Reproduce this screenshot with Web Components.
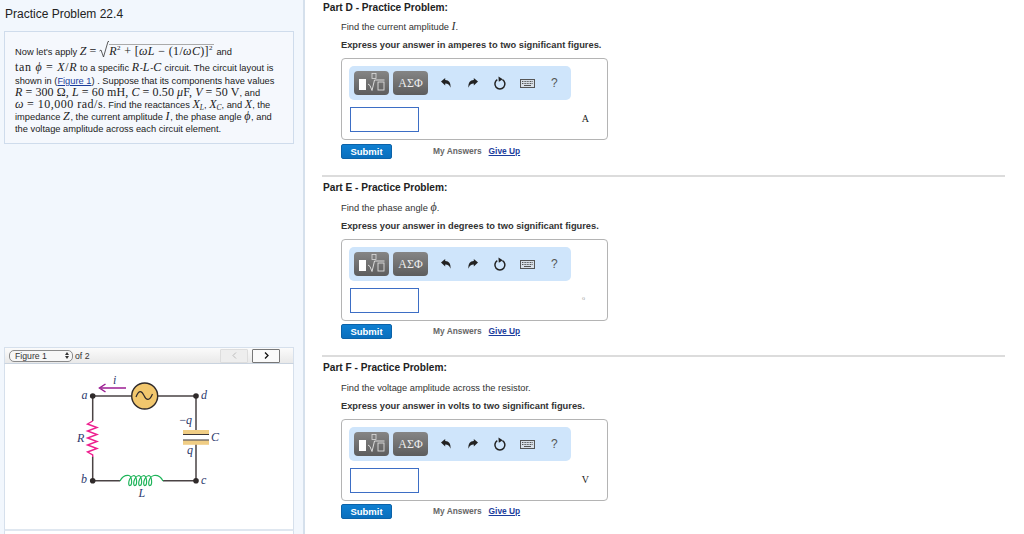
<!DOCTYPE html>
<html><head><meta charset="utf-8"><style>
html,body{margin:0;padding:0;background:#fff}
body{width:1024px;height:534px;overflow:hidden;display:flex;font-family:"Liberation Sans",Arial,sans-serif;color:#222}
.right{flex:none;padding-left:17px;width:683px}
i{font-family:"Liberation Serif",serif;font-size:12px;line-height:0}
</style></head><body>
<left-pane></left-pane>
<div class="right">
<problem-part first part-name="Part D - Practice Problem:" unit="A">Find the current amplitude <i>I</i>.<span slot="express">Express your answer in amperes to two significant figures.</span></problem-part>
<problem-part part-name="Part E - Practice Problem:" unit="o" faint>Find the phase angle <i>ϕ</i>.<span slot="express">Express your answer in degrees to two significant figures.</span></problem-part>
<problem-part part-name="Part F - Practice Problem:" unit="V">Find the voltage amplitude across the resistor.<span slot="express">Express your answer in volts to two significant figures.</span></problem-part>
</div>
<script>
function el(name,html){
  customElements.define(name,class extends HTMLElement{
    connectedCallback(){
      if(this.shadowRoot)return;
      const s=this.attachShadow({mode:'open'});
      s.innerHTML=typeof html==='function'?html(this):html;
    }
  });
}
el('math-toolbar',`<style>
:host{display:grid;grid-template-columns:35px 43px repeat(5,27.2px);align-items:center;width:222px;height:34px;box-sizing:border-box;padding-left:5px;background:#cfe5fb;border-radius:5px}
.b{height:24px;width:35px;border-radius:4px;background:linear-gradient(#858585,#5d5d5d);box-sizing:border-box;display:flex;align-items:center;justify-content:center;color:#eee;font:12px "Liberation Serif",serif}
.b2{margin-left:4px}
.i{display:flex;justify-content:center;align-items:center;height:24px}
.q{font:12px "Liberation Sans",sans-serif;color:#555}
</style>
<div class="b"><svg width="33" height="22" viewBox="0 0 33 22"><rect x="4" y="7" width="7" height="11" fill="#fff"/><rect x="17" y="1.5" width="4" height="5" fill="none" stroke="#ddd" stroke-width=".8"/><path d="M13 12l2 1.500 2 5 2.500-10.500h10" fill="none" stroke="#e6e6e6" stroke-width=".9"/><rect x="23" y="10" width="6" height="8" fill="none" stroke="#ddd" stroke-width=".9"/></svg></div>
<div class="b b2">ΑΣΦ</div>
<div class="i"><svg width="12" height="12" viewBox="0 0 12 12"><path d="M1 4.500L5.200 1V3C9 3 11 6 10.500 10.800 9.500 7.800 8 6.500 5.200 6.500V8.500Z" fill="#222"/></svg></div>
<div class="i"><svg width="12" height="12" viewBox="0 0 12 12"><path d="M11 4.500L6.800 1V3C3 3 1 6 1.500 10.800 2.500 7.800 4 6.500 6.800 6.500V8.500Z" fill="#222"/></svg></div>
<div class="i"><svg width="14" height="14" viewBox="0 0 14 14"><path d="M4.300 3.700A5 5 0 1 0 9.500 3.700" fill="none" stroke="#222" stroke-width="1.500"/><path d="M5.500 0.500L9.800 3.300 5.800 5.800Z" fill="#222"/></svg></div>
<div class="i"><svg width="15" height="9" viewBox="0 0 15 9"><rect x=".5" y=".5" width="14" height="8" fill="#d8dfe6" stroke="#555"/><path d="M2 2.500h11M2 4.500h11" stroke="#555" stroke-width="1" stroke-dasharray="1 .6"/><path d="M4 6.500h7" stroke="#555"/></svg></div>
<div class="i q">?</div>`);

el('answer-box',h=>`<style>
:host{display:block;box-sizing:border-box;width:267px;height:82px;border:1px solid #b4b4b4;border-radius:4px;padding:7px 7px 0 7px;background:#fff}
.row{display:flex;align-items:center;margin-top:7px;height:24px}
.inp{width:69px;height:25px;box-sizing:border-box;border:1px solid #3d6ec5;background:#fff;margin-left:1px}
.u{margin-left:auto;margin-right:11px;margin-top:-2px;font:10px "Liberation Serif",serif;color:#222}
:host([faint]) .u{font-size:6px;color:#999;margin-right:15px;margin-top:-4px}
</style><math-toolbar></math-toolbar><div class="row"><div class="inp"></div><div class="u">${h.getAttribute('unit')}</div></div>`);

el('problem-part',h=>`<style>
:host{display:block;box-sizing:border-box;height:180px;font-size:9.3px;--s:8px;--a:2px}
:host([first]){--s:7px;--a:3px}
.h{font-weight:700;font-size:10.15px;line-height:12px;padding:2px 0 0 1px;color:#222}
.body{padding-left:19px}
.f{line-height:12px;height:12px;margin-top:var(--s);color:#333}
.e{line-height:12px;height:12px;margin-top:6px;font-weight:700;color:#333}
answer-box{margin-top:7px}
.act{display:flex;align-items:center;margin-top:var(--a);height:16px;font-weight:700;font-size:8.4px}
.s{width:51px;height:15px;border-radius:2px;background:linear-gradient(#0f7fd1,#0a6fbd);border:1px solid #0b62a8;box-sizing:border-box;color:#fff;font-size:9.5px;display:flex;align-items:center;justify-content:center}
.m{margin-left:41px;color:#666}
.g{margin-left:7px;color:#1a3c9c;text-decoration:underline}
.sep{border-bottom:2px solid #dcdcdc;margin-top:16px}
</style>
<div class="h">${h.getAttribute('part-name')}</div>
<div class="body"><div class="f"><slot></slot></div><div class="e"><slot name="express"></slot></div>
<answer-box unit="${h.getAttribute('unit')}" ${h.hasAttribute('faint')?'faint':''}></answer-box>
<div class="act"><div class="s">Submit</div><div class="m">My Answers</div><div class="g">Give Up</div></div></div>
<div class="sep"></div>`);

el('intro-box',`<style>
:host{display:block;box-sizing:border-box;width:290px;height:113px;margin-left:4px;border:1px solid #cfdcec;background:#f5f8fd;padding:9px 0 0 10px;font-size:9.3px;color:#222}
.l{white-space:nowrap;line-height:12px;height:12px}
.tall{height:20px;line-height:22px}
.t2{height:14px;line-height:15px}
.m{font:12px "Liberation Serif",serif;line-height:0}
i{font-family:"Liberation Serif",serif;font-size:12px;line-height:0}
a{color:#1a3c9c;text-decoration:underline}
sup{font-size:7px;line-height:0}
.root{border-top:1px solid #aaa;padding:0 1px 0 0;display:inline-block;line-height:12px;letter-spacing:.35px}
svg{vertical-align:-3px}
sub{font-size:7.5px;line-height:0;vertical-align:-1.5px}
.t2 .m,.t2 i{letter-spacing:.7px}
.l4 .m{letter-spacing:.1px}
.l5 .m{letter-spacing:.5px}
.l6 i{letter-spacing:.7px}
</style>
<div class="l tall">Now let's apply <i>Z</i><span class="m"> = </span><svg width="10" height="17" viewBox="0 0 10 17"><path d="M.5 10l1.500-1 2.500 7L9 .500h1" fill="none" stroke="#333" stroke-width=".8"/></svg><span class="root m"><i>R</i><sup>2</sup> + [<i>ωL</i> − (1/<i>ωC</i>)]<sup>2</sup></span> and</div>
<div class="l t2"><span class="m">tan </span><i>ϕ</i><span class="m"> = </span><i>X</i><span class="m">/</span><i>R</i> to a specific <i>R</i>-<i>L</i>-<i>C</i> circuit. The circuit layout is</div>
<div class="l">shown in (<a>Figure 1</a>) . Suppose that its components have values</div>
<div class="l l4"><i>R</i><span class="m"> = 300 Ω, </span><i>L</i><span class="m"> = 60 mH, </span><i>C</i><span class="m"> = 0.50 </span><i>μ</i><span class="m">F, </span><i>V</i><span class="m"> = 50 V</span>, and</div>
<div class="l l5"><i>ω</i><span class="m"> = 10,000 rad/s</span>. Find the reactances <i>X<sub>L</sub></i>, <i>X<sub>C</sub></i>, and <i>X</i>, the</div>
<div class="l l6">impedance <i>Z</i>, the current amplitude <i>I</i>, the phase angle <i>ϕ</i>, and</div>
<div class="l">the voltage amplitude across each circuit element.</div>`);

el('figure-pane',`<style>
:host{display:block;box-sizing:border-box;width:290px;margin:203px 0 0 4px;font-size:8.7px;color:#333}
.bar{height:17px;box-sizing:border-box;border:1px solid #d6e0ec;border-bottom:1px solid #c9d3df;background:linear-gradient(#fbfbfb,#e9e9e9);display:flex;align-items:center;padding-left:4px}
.sel{width:64px;height:12px;box-sizing:border-box;border:1px solid #8a8a8a;border-radius:5px;background:#f6f6f6;display:flex;align-items:center;padding-left:5px;justify-content:space-between;line-height:10px}
.arr{display:flex;flex-direction:column;gap:1px;margin-right:3px}
.up,.dn{width:0;height:0;border-left:2px solid transparent;border-right:2px solid transparent}
.up{border-bottom:3px solid #333}.dn{border-top:3px solid #333}
.of{margin-left:2px}
.nb{width:28px;height:14px;box-sizing:border-box;border-radius:1px;display:flex;align-items:center;justify-content:center}
.p{margin-left:auto;border:1px solid #ddd;background:#eee}
.n{margin:0 13px 0 4px;border:1px solid #777;background:#fafafa}
.pic{height:167px;box-sizing:border-box;background:#fff;border:1px solid #d6e0ec;border-top:0;border-bottom:2px solid #dfe7f0}
.tail{height:10px;background:#fff;border:1px solid #d6e0ec;border-width:0 1px}
svg{display:block}
text{font-family:"Liberation Serif",serif;font-style:italic;font-size:12px;fill:#2d3a6e}
</style>
<div class="bar"><div class="sel">Figure 1<div class="arr"><div class="up"></div><div class="dn"></div></div></div><div class="of">of 2</div>
<div class="nb p"><svg width="5" height="7" viewBox="0 0 5 7"><path d="M4 .5L1 3.500 4 6.500" fill="none" stroke="#bbb"/></svg></div><div class="nb n"><svg width="5" height="7" viewBox="0 0 5 7"><path d="M1 .5L4 3.500 1 6.500" fill="none" stroke="#111" stroke-width="1.300"/></svg></div></div>
<div class="pic"><svg width="288" height="165" viewBox="5 364 288 165">
<path d="M92.700 396H196V431M196 444V480.700H163M120 480.700H92.700V456.700M92.700 421V396" fill="none" stroke="#4a4344" stroke-width="1.500"/>
<circle cx="144.700" cy="396" r="13" fill="#f2c76d" stroke="#2f2a2a" stroke-width="1.400"/>
<path d="M136 397c2.500-7 5.500-7 8-1.500s5.500 5.500 8.500-1.500" fill="none" stroke="#2f2a2a" stroke-width="1.200"/>
<circle cx="92.700" cy="396" r="2.800" fill="#2f2a2a"/><circle cx="196" cy="396" r="2.800" fill="#2f2a2a"/><circle cx="92.700" cy="480.700" r="2.800" fill="#2f2a2a"/><circle cx="196" cy="480.700" r="2.800" fill="#2f2a2a"/>
<path d="M126 388H101" stroke="#9b1d92" stroke-width="1.500"/><path d="M105.500 384L99.500 388 105.500 392" fill="none" stroke="#9b1d92" stroke-width="1.500"/>
<path d="M92.700 421L87.500 424 97 427.500 87.500 431 97 434.500 87.500 438 97 441.500 87.500 445 97 448.500 87.500 452 92.700 455V457" fill="none" stroke="#ee1e8e" stroke-width="1.400"/>
<rect x="183" y="430" width="26" height="4.500" fill="#f0cd84"/><rect x="183" y="440.300" width="26" height="4.500" fill="#f0cd84"/>
<path d="M183 434.500H209M183 440H209" stroke="#3a3536" stroke-width="1.200"/>
<path d="M120 481C122 477 125 475 129 475.500c3 1 3.500 9.500 1 10c-2.500 .5-1.500-9 4-10c3 1 3.500 9.500 1 10c-2.500 .5-1.500-9 4-10c3 1 3.500 9.500 1 10c-2.500 .5-1.500-9 4-10c3 1 3.500 9.500 1 10c-2.500 .5-1.500-9 4-10c3 1 3.500 9.500 1 10c-2.500 .5-1.500-9 4-10C158 475 161 477 163 481" fill="none" stroke="#1fb45a" stroke-width="1.200"/>
<text x="113" y="384">i</text><text x="81.500" y="399">a</text><text x="201" y="399">d</text><text x="77" y="442">R</text><text x="179.500" y="424" style="font-style:normal">−</text><text x="186" y="424">q</text><text x="187" y="454">q</text><text x="211" y="441">C</text><text x="81" y="483">b</text><text x="201" y="484">c</text><text x="138.500" y="497">L</text>
</svg></div><div class="tail"></div>`);

el('left-pane',`<style>
:host{display:block;flex:none;box-sizing:border-box;width:305px;height:534px;background:#f2f7fd;border-right:2px solid #d5e0ec;overflow:hidden}
.t{font-size:12px;line-height:14px;padding:7px 0 10px 5px;color:#222}
</style><div class="t">Practice Problem 22.4</div><intro-box></intro-box><figure-pane></figure-pane>`);
</script>
</body></html>
